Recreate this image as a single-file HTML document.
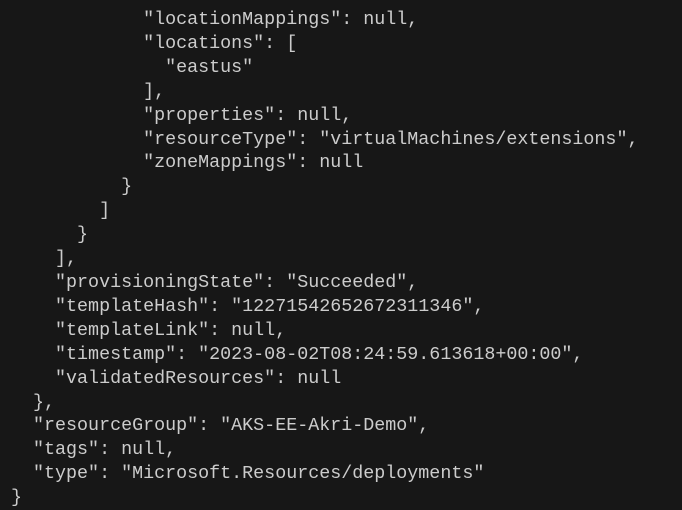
<!DOCTYPE html>
<html><head><meta charset="utf-8"><style>
html,body{margin:0;padding:0;background:#171717;width:682px;height:496px;overflow:hidden}
pre{margin:0;position:absolute;left:11px;top:8px;font-family:"Liberation Mono",monospace;font-size:18.35px;line-height:23.9px;color:#cccccc}
</style></head><body><pre>            "locationMappings": null,
            "locations": [
              "eastus"
            ],
            "properties": null,
            "resourceType": "virtualMachines/extensions",
            "zoneMappings": null
          }
        ]
      }
    ],
    "provisioningState": "Succeeded",
    "templateHash": "12271542652672311346",
    "templateLink": null,
    "timestamp": "2023-08-02T08:24:59.613618+00:00",
    "validatedResources": null
  },
  "resourceGroup": "AKS-EE-Akri-Demo",
  "tags": null,
  "type": "Microsoft.Resources/deployments"
}</pre></body></html>
